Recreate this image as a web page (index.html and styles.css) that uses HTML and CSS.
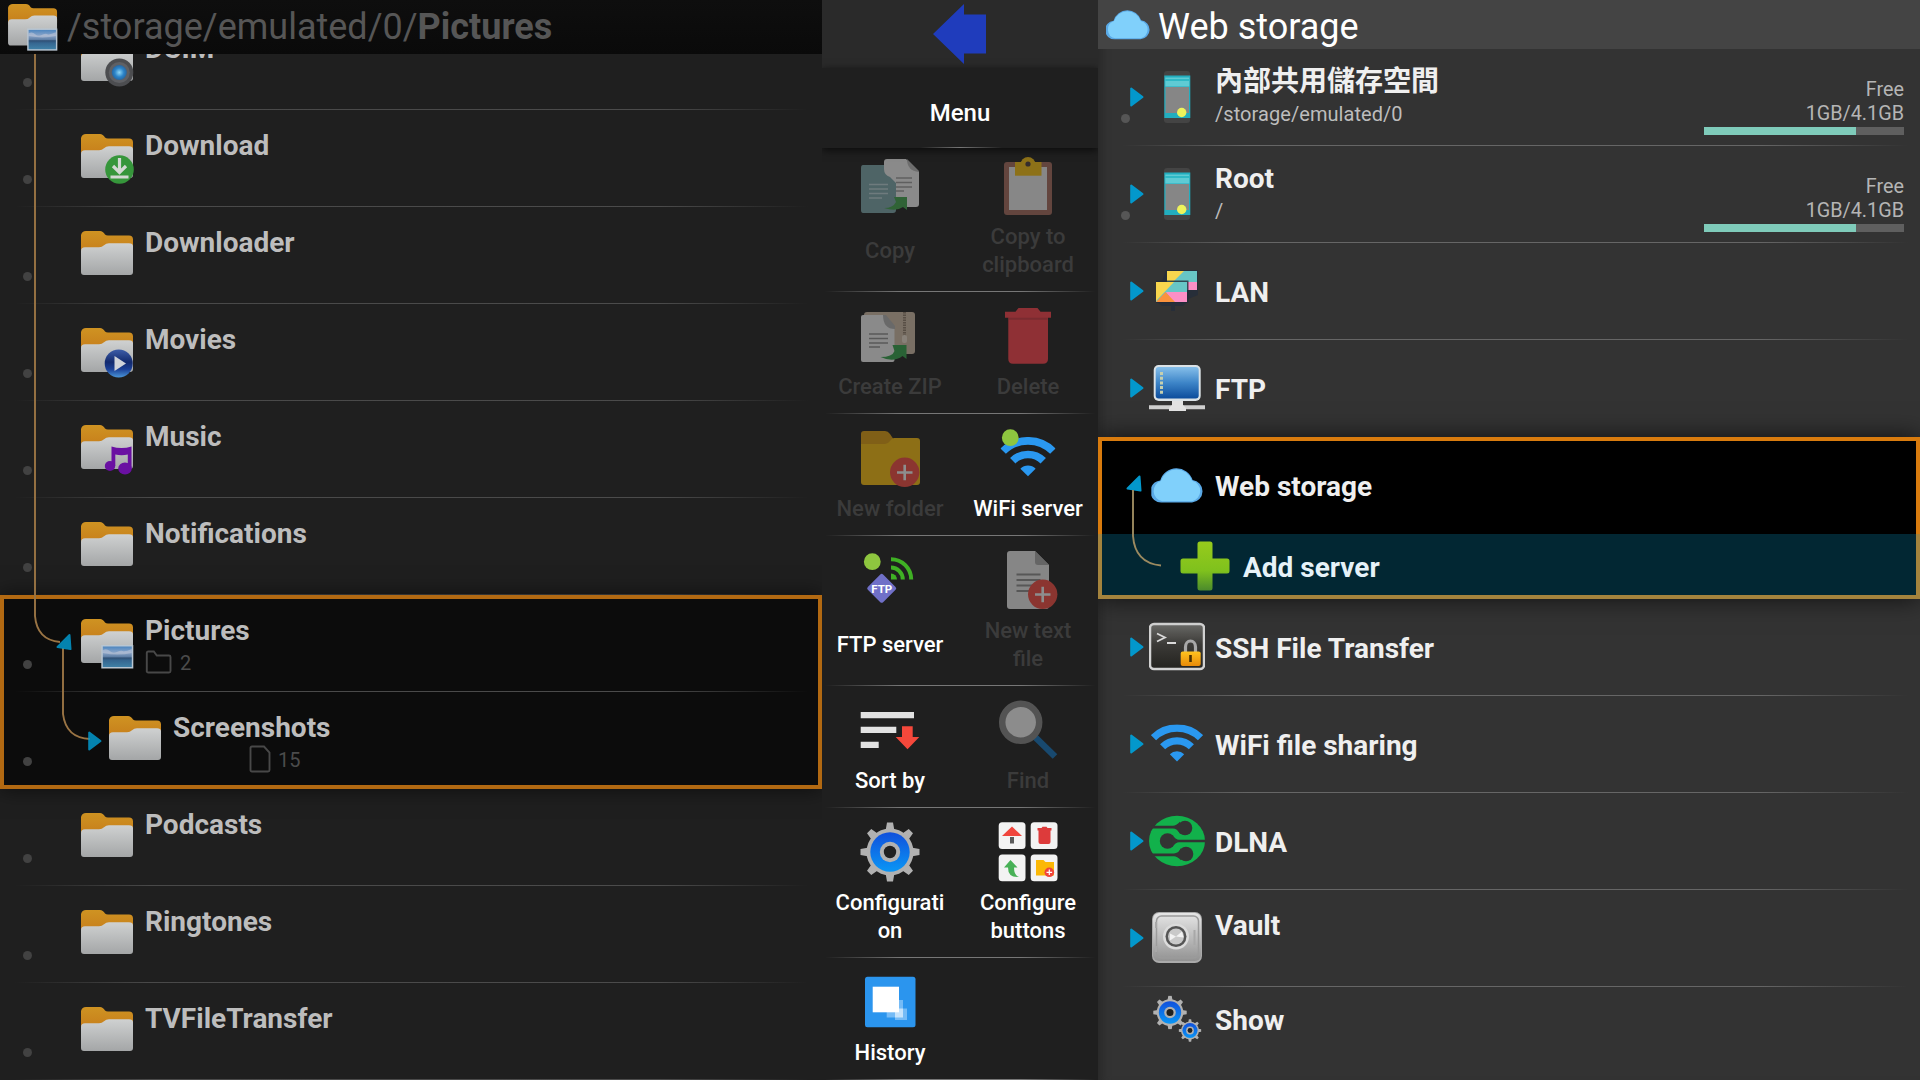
FILE: index.html
```html
<!DOCTYPE html>
<html lang="en">
<head>
<meta charset="utf-8">
<title>File manager</title>
<link rel="stylesheet" href="styles.css">
</head>
<body>
<svg class="defs" aria-hidden="true">
  <defs>
    <linearGradient id="gFront" x1="0" y1="0" x2="0" y2="1"><stop offset="0" stop-color="#cfd1d1"/><stop offset="1" stop-color="#a4a6a7"/></linearGradient>
    <linearGradient id="gTab" x1="0" y1="0" x2="0" y2="1"><stop offset="0" stop-color="#cf9322"/><stop offset="1" stop-color="#c67d1b"/></linearGradient>
    <linearGradient id="gSea" x1="0" y1="0" x2="0" y2="1"><stop offset="0" stop-color="#4d86c0"/><stop offset=".3" stop-color="#8ba5c8"/><stop offset=".5" stop-color="#5f7fa6"/><stop offset=".56" stop-color="#2f5075"/><stop offset=".68" stop-color="#356690"/><stop offset="1" stop-color="#3f80a6"/></linearGradient>
    <linearGradient id="gBlue" x1="0" y1="0" x2="0" y2="1"><stop offset="0" stop-color="#1150dc"/><stop offset="1" stop-color="#0a96f5"/></linearGradient>
    <linearGradient id="gScreen" x1="0" y1="0" x2="0" y2="1"><stop offset="0" stop-color="#86bfea"/><stop offset=".5" stop-color="#3d85c8"/><stop offset="1" stop-color="#0c4c9c"/></linearGradient>
    <linearGradient id="gPlus" x1="0" y1="0" x2="0" y2="1"><stop offset="0" stop-color="#97cb1c"/><stop offset=".6" stop-color="#7fc11d"/><stop offset="1" stop-color="#4b8a2c"/></linearGradient>
    <linearGradient id="gTerm" x1="0" y1="0" x2="0" y2="1"><stop offset="0" stop-color="#6b6b68"/><stop offset=".45" stop-color="#3b3a37"/><stop offset="1" stop-color="#24231f"/></linearGradient>
    <linearGradient id="gLock" x1="0" y1="0" x2="0" y2="1"><stop offset="0" stop-color="#ffc31f"/><stop offset="1" stop-color="#e88a08"/></linearGradient>
    <linearGradient id="gSafe" x1="0" y1="0" x2="0" y2="1"><stop offset="0" stop-color="#e6e6e6"/><stop offset="1" stop-color="#929292"/></linearGradient>
    <radialGradient id="gLens"><stop offset="0" stop-color="#8fd6f5"/><stop offset=".6" stop-color="#2b84c9"/><stop offset="1" stop-color="#2766a0"/></radialGradient>
    <linearGradient id="gPlay" x1="0" y1="0" x2="0" y2="1"><stop offset="0" stop-color="#3d5da8"/><stop offset=".45" stop-color="#132a6e"/><stop offset=".7" stop-color="#1b3f96"/><stop offset="1" stop-color="#4a96d8"/></linearGradient>
  </defs>
  <symbol id="folder" viewBox="0 0 54 52">
    <path fill="url(#gTab)" d="M0 22V4Q1 0 5 0h14q3 0 5 3.500q1 .9 3 .9h21q4 0 4 4V20z"/>
    <path fill="url(#gFront)" d="M0 20q0-3.700 4-3.700h14q3 0 5-2t5-2h20q4 0 4 3V41q0 3-3 3H3q-3 0-3-3z"/>
  </symbol>
  <symbol id="b-pic" viewBox="0 0 54 52"><path fill="#b9c6d2" d="M20.300 26h32v23.500h-32z"/><path fill="url(#gSea)" d="M21.800 27.500h29v20.500h-29z"/><path fill="#c3c9d8" opacity=".55" d="M21.800 31q4-2 7 1t7 1 6-1 9-2v4q-14 3-29 0z"/></symbol>
  <symbol id="b-cam" viewBox="0 0 54 52"><circle cx="38.300" cy="35.500" r="14" fill="#4c4d50"/><circle cx="38.300" cy="35.500" r="10.500" fill="#5f6064"/><circle cx="38.300" cy="35.500" r="7.500" fill="url(#gLens)"/></symbol>
  <symbol id="b-down" viewBox="0 0 54 52"><circle cx="38.500" cy="35.500" r="14.300" fill="#36963b"/><path d="M38.500 24v14M32 32l6.500 6.500L45 32M29.500 43h18" fill="none" stroke="#d3d8d3" stroke-width="3.200"/></symbol>
  <symbol id="b-play" viewBox="0 0 54 52"><circle cx="37.700" cy="35.500" r="14" fill="url(#gPlay)"/><path fill="#d0d3da" d="M33.500 28l11.500 7.500L33.500 43z"/></symbol>
  <symbol id="b-music" viewBox="0 0 54 52"><g fill="#6a10a2"><path d="M30.500 21.500q10 3 20 0V44h-3.700V29.500q-6 1.500-12.500 0V41h-3.800z"/><ellipse cx="29" cy="41" rx="5.200" ry="5"/><ellipse cx="44" cy="43.500" rx="6.800" ry="6"/></g></symbol>
  <symbol id="tri" viewBox="0 0 14 20"><path fill="#0398cc" stroke="#0398cc" stroke-width="2" stroke-linejoin="round" d="M1.200 1.500v17L12.500 10z"/></symbol>
  <symbol id="tri-open" viewBox="0 0 16 17"><path fill="#0398cc" stroke="#0398cc" stroke-width="2" stroke-linejoin="round" d="M13.500 1.500L1.500 13.500l13 2z"/></symbol>
  <symbol id="cloud" viewBox="0 0 52 36"><path fill="#5aa9e6" d="M11 35.500A11 11 0 0 1 9 13.500 A17 17 0 0 1 41.500 13 A11.300 11.300 0 0 1 41 35.500z"/><path fill="#80d0fb" d="M11 34.300A10.500 10.500 0 0 1 9.500 14 A16.500 16.500 0 0 1 41 13.800 A10.500 10.500 0 0 1 41 34.300z"/></symbol>
  <symbol id="wifi" viewBox="0 0 52 38"><g fill="none" stroke="#2a98f0"><path stroke-width="7.300" d="M2.500 13.200A33.300 33.300 0 0 1 49.500 13.200"/><path stroke-width="7.200" d="M11.600 22.300A20.400 20.400 0 0 1 40.400 22.300"/></g><path fill="#2a98f0" d="M26 37l-7.200-7.200a10.200 10.200 0 0 1 14.400 0z"/></symbol>
  <symbol id="phone" viewBox="0 0 56 56"><rect x="15" y="2" width="26" height="52" rx="3" fill="#444"/><path fill="#22aebf" d="M15.300 6.500h26V49h-26z"/><path fill="#5fcbd4" d="M16.300 8.500h24v9h-24z"/><path fill="#2fb9c6" d="M16.300 10h24v2h-24z"/><path fill="#868686" d="M16.500 18h23.500v26H16.500z"/><circle cx="32.700" cy="43.500" r="4.700" fill="#eef35b"/></symbol>
  <symbol id="lan" viewBox="0 0 56 56"><path fill="#272e39" d="M17 7h32v25l-10 4H8v-4zM8 39h30l-4 4h-8v5h-4v-5h-9z"/><path fill="#67c6c6" d="M18 8h30v19H18z"/><path fill="#f8d64e" d="M18 8h17L25 18h-7z"/><path fill="#fc8fc6" d="M38 19h10v8h-9z"/><path fill="#222a38" d="M7 17.500h32.500V40H7z" opacity=".8"/><path fill="#67c6c6" d="M7 19h31v20H7z"/><path fill="#f8d64e" d="M7 19h18L7 38z"/><path fill="#fc8fc6" d="M38 29v10H24l-7-10z"/><path fill="#fb923c" d="M16.500 29L26 39H7z"/></symbol>
  <symbol id="ftp" viewBox="0 0 56 56"><path fill="#d0d0d0" d="M0 45.300h56v4H0z"/><path fill="#e3e3e3" d="M23 40h11v5l3 3v3H20v-3l3-3z"/><rect x="4.700" y="5" width="47" height="36" rx="5" fill="#dbe2e6"/><rect x="6.700" y="7" width="43" height="31.500" rx="3" fill="url(#gScreen)"/><path stroke="#c6cfae" stroke-width="3" stroke-dasharray="3 1.700" d="M12.500 12v23"/></symbol>
  <symbol id="plus" viewBox="0 0 56 56"><path fill="url(#gPlus)" d="M23 3.500h10q2.500 0 2.500 2.500v14.500H50q2.500 0 2.500 2.500v10q0 2.500-2.500 2.500H35.500V50q0 2.500-2.500 2.500H23q-2.500 0-2.500-2.500V35.500H6q-2.500 0-2.500-2.500V23q0-2.500 2.500-2.500h14.500V6q0-2.500 2.500-2.500z"/></symbol>
  <symbol id="ssh" viewBox="0 0 56 56"><rect x="1" y="5" width="54" height="45" rx="4" fill="url(#gTerm)" stroke="#d2d2d2" stroke-width="2.500"/><path d="M8 14.500l8 4-8 4M18 24h9" fill="none" stroke="#dadada" stroke-width="1.800"/><path d="M36.500 34v-6a5 6 0 0 1 10 0v6" fill="none" stroke="#a8a8a8" stroke-width="3.200"/><rect x="31.700" y="32.500" width="20" height="14.500" rx="2" fill="url(#gLock)"/><path stroke="#4a3000" stroke-width="2.600" d="M41.500 36v7"/></symbol>
  <symbol id="dlna" viewBox="0 0 56 56"><ellipse cx="28" cy="28" rx="28" ry="25.200" fill="#12b14b"/><g fill="#333"><circle cx="36" cy="15" r="7.300"/><path d="M2 12.800h22q3 0 7-4v12q-3-5.200-7-5.200H2z"/><circle cx="18.500" cy="28" r="7.700"/><path d="M56 26.700H30q-3 0-7.500-5v12.600q4.500-5 7.500-5h26z"/><circle cx="37" cy="41" r="7.300"/><path d="M2 43.200h23q3 0 7 4v-12q-3 5.200-7 5.200H2z"/></g></symbol>
  <symbol id="vault" viewBox="0 0 56 56"><rect x="3" y="2" width="50" height="51" rx="7" fill="#aaa"/><rect x="4" y="3" width="48" height="48" rx="6" fill="url(#gSafe)"/><rect x="7.500" y="6" width="42" height="42" rx="5" fill="none" stroke="#9b9b9b" stroke-width="1.500"/><circle cx="27" cy="26.500" r="13" fill="#dcdcdc"/><circle cx="27" cy="26.500" r="10.500" fill="#555"/><circle cx="27" cy="26.500" r="8" fill="#c9c9c9"/><path fill="#f2f2f2" d="M27 26.500l-6 4v-7zM27 26.500l6-5 1.500 6z"/><path stroke="#a8a8a8" stroke-width="2" d="M45.500 20v15M7 12v6M7 36v6"/></symbol>
  <symbol id="gear" viewBox="0 0 60 60">
    <g fill="#b1b1b1"><circle cx="30" cy="30" r="23.500"/>
      <g id="teeth"><path id="tooth" d="M25.500 9l1.500-8.500h6L34.500 9zM25.500 51l1.500 8.500h6l1.500-8.500z"/><use href="#tooth" transform="rotate(45 30 30)"/><use href="#tooth" transform="rotate(90 30 30)"/><use href="#tooth" transform="rotate(135 30 30)"/></g></g>
    <circle cx="30" cy="30" r="19.700" fill="url(#gBlue)"/><circle cx="30" cy="30" r="10.200" fill="#b1b1b1"/><circle cx="30" cy="30" r="6.200" fill="#202020"/>
  </symbol>
  <symbol id="badge-plus" viewBox="0 0 60 60"><circle cx="44.700" cy="44.300" r="14.700" fill="#ee4a40"/><path stroke="#f2f2f2" stroke-width="2.600" d="M37 44.500h15.500M44.700 36.700v15.500"/></symbol>
</svg>

<div class="app">
  <section class="panel files">
    <header class="path">
      <svg class="path-icon" viewBox="0 0 54 52"><use href="#folder"/><use href="#b-pic"/></svg>
      <h1>/storage/emulated/0/<b>Pictures</b></h1>
    </header>
    <div class="file-list">
      <div class="row"><i class="dot"></i><svg class="fi"><use href="#folder"/><use href="#b-cam"/></svg><div class="info"><span class="name">DCIM</span></div></div>
      <div class="row"><i class="dot"></i><svg class="fi"><use href="#folder"/><use href="#b-down"/></svg><div class="info"><span class="name">Download</span></div></div>
      <div class="row"><i class="dot"></i><svg class="fi"><use href="#folder"/></svg><div class="info"><span class="name">Downloader</span></div></div>
      <div class="row"><i class="dot"></i><svg class="fi"><use href="#folder"/><use href="#b-play"/></svg><div class="info"><span class="name">Movies</span></div></div>
      <div class="row"><i class="dot"></i><svg class="fi"><use href="#folder"/><use href="#b-music"/></svg><div class="info"><span class="name">Music</span></div></div>
      <div class="row"><i class="dot"></i><svg class="fi"><use href="#folder"/></svg><div class="info"><span class="name">Notifications</span></div></div>
      <div class="current">
        <div class="row"><i class="dot"></i><svg class="fi"><use href="#folder"/><use href="#b-pic"/></svg>
          <div class="info"><span class="name">Pictures</span>
            <span class="count"><svg width="27" height="24" viewBox="0 0 27 24"><path d="M1.800 22V3q0-1.500 1.500-1.500h5.500l3 4H24q1.500 0 1.500 1.500v14q0 1.500-1.500 1.500H3.300q-1.500 0-1.500-1.500z" fill="none" stroke="#484848" stroke-width="1.900"/></svg>2</span>
          </div></div>
        <div class="row child"><i class="dot"></i><svg class="fi"><use href="#folder"/></svg>
          <div class="info"><span class="name">Screenshots</span>
            <span class="count docs"><svg width="22" height="28" viewBox="0 0 22 28"><path d="M1.500 25V3q0-1.500 1.500-1.500h12l5.500 6V25q0 1.500-1.500 1.500H3q-1.500 0-1.500-1.500z" fill="none" stroke="#484848" stroke-width="1.900"/></svg>15</span>
          </div></div>
      </div>
      <div class="row"><i class="dot"></i><svg class="fi"><use href="#folder"/></svg><div class="info"><span class="name">Podcasts</span></div></div>
      <div class="row"><i class="dot"></i><svg class="fi"><use href="#folder"/></svg><div class="info"><span class="name">Ringtones</span></div></div>
      <div class="row"><i class="dot"></i><svg class="fi"><use href="#folder"/></svg><div class="info"><span class="name">TVFileTransfer</span></div></div>
    </div>
    <svg class="tree" width="110" height="720" viewBox="0 54 110 720">
      <path d="M35 54V616Q37 640 60 642M63 648V714Q66 738 90 739" fill="none" stroke="#9a7444" stroke-width="1.900"/>
      <use href="#tri-open" x="56" y="633.500" width="16" height="17" opacity=".85"/>
      <use href="#tri" x="88" y="731" width="14" height="20" opacity=".85"/>
    </svg>
  </section>

  <nav class="panel menu">
    <div class="switch"><svg width="54" height="60" viewBox="0 0 54 60"><path fill="#1f3cbc" d="M0 30L31 0V10.500H53V49.500H31V60z"/></svg></div>
    <div class="menu-title">Menu</div>
    <div class="grid">
      <div class="line">
        <div class="item off"><svg viewBox="0 0 60 60"><path fill="#ececec" d="M27 3h19l13 13v32q0 3-3 3H27q-3 0-3-3V6q0-3 3-3z"/><path fill="#b5b5b5" d="M47 3l12 12v1q-12-1-12-13z"/><path fill="#7aa3a8" d="M3 9h21v4q0 6 6 8l6 6v27q0 3-3 3H3q-2 0-2-3V12q0-3 2-3z"/><path stroke="#b7cfd3" stroke-width="1.500" d="M9 28.500h19M9 33h19M9 37.500h19M9 42h13"/><path stroke="#9a9a9a" stroke-width="1.400" d="M36 22h16M36 26.500h16M36 31h16M36 35h8"/><path fill="#40a24c" d="M24 52q9 0 12-6l-2-5h13v13l-4-3q-7 5-19 1z"/></svg><span>Copy</span></div>
        <div class="item off"><svg viewBox="0 0 60 60"><rect x="6" y="6" width="48" height="53" rx="3" fill="#a1695c"/><path fill="#e6e6e6" d="M11 11h38v43H11z"/><circle cx="30" cy="8.500" r="7.500" fill="#f2bc12"/><path fill="#f2bc12" d="M17 6h26.500v13.700H17z"/><circle cx="30" cy="8" r="2.600" fill="#493b3b"/></svg><span>Copy to clipboard</span></div>
      </div>
      <div class="line">
        <div class="item off"><svg viewBox="0 0 60 60"><rect x="4" y="6" width="51" height="42" rx="3" fill="#ccb8a3"/><path stroke="#8c7b6b" stroke-width="3" stroke-dasharray="1.500 1" d="M44.500 6v26"/><rect x="42" y="29" width="5" height="8" rx="2" fill="#e9dccb"/><path fill="#ececec" d="M3 9h20l11.500 12v33q0 2-2 2H3q-2 0-2-2V11q0-2 2-2z"/><path fill="#adadad" d="M23 9h3l9 11v3q-12 0-12-14z"/><path stroke="#8e8e8e" stroke-width="1.500" d="M9 28h19M9 32.500h19M9 37h19M9 41h11"/><path fill="#34a04a" d="M20.500 51q12 0 14-6l-2-6h14v14l-4-3q-9 7-22 1z"/></svg><span>Create ZIP</span></div>
        <div class="item off"><svg viewBox="0 0 60 60"><path fill="#f5404a" d="M7 5.700h10.500L20.500 2h19l3 3.700H53v6h-3V53q0 4.700-5 4.700H15q-4.700 0-4.700-4.700V11.700H7z"/><path fill="#a62d35" d="M10.300 11.700h39.400v2H10.300z" opacity=".5"/></svg><span>Delete</span></div>
      </div>
      <div class="line">
        <div class="item off"><svg viewBox="0 0 60 60"><path fill="#d99b10" d="M1 14V6q0-3 3-3h21q3 0 5 3l4 6v5H1z"/><path fill="#f2b90f" d="M1 16h24q3 0 5-3t4-3h23q3 0 3 3v41q0 3-3 3H4q-3 0-3-3z"/><use href="#badge-plus"/></svg><span>New folder</span></div>
        <div class="item"><svg viewBox="0 0 60 60"><use href="#wifi" x="2.500" y="9" width="55" height="40.500"/><circle cx="12.300" cy="9.700" r="8.400" fill="#8ec63f"/></svg><span>WiFi server</span></div>
      </div>
      <div class="line">
        <div class="item"><svg viewBox="0 0 60 60"><circle cx="12.300" cy="11.700" r="8.400" fill="#8ec63f"/><path fill="none" stroke="#3fb024" stroke-width="4" d="M31 9.200A20.200 20.200 0 0 1 51.200 29.400M31 17.600A11.800 11.800 0 0 1 42.800 29.400"/><path fill="#3fb024" d="M31 23.500a6 6 0 0 1 6 6h-6z"/><rect x="10.900" y="27.500" width="21.600" height="21.600" rx="2" transform="rotate(45 21.700 38.300)" fill="#7070c8"/><text x="21.700" y="42.500" text-anchor="middle" class="ftp-text">FTP</text></svg><span>FTP server</span></div>
        <div class="item off"><svg viewBox="0 0 60 60"><path fill="#e4e4e4" d="M12 1h25l14 14v41q0 3-3 3H12q-3 0-3-3V4q0-3 3-3z"/><path fill="#a6a6a6" d="M37 1l14 14H40q-3 0-3-3z"/><path stroke="#8a8a8a" stroke-width="1.900" d="M18.500 24.500h24M18.500 30h24M18.500 35.500h20M18.500 41h13"/><use href="#badge-plus"/></svg><span>New text file</span></div>
      </div>
      <div class="line">
        <div class="item"><svg viewBox="0 0 60 60"><path fill="#e2e2e2" d="M.7 12H54v6.200H.7zM.7 26.700h35.600v6.200H.7zM.7 41.700h18v6.200H.7z"/><path fill="#f5483b" d="M42 26.300h10.700V37h6.600L47.500 49.300 35.700 37H42z"/></svg><span>Sort by</span></div>
        <div class="item off"><svg viewBox="0 0 60 60"><path stroke="#1271b8" stroke-width="6.500" d="M37 37l20 19.500"/><circle cx="22.700" cy="22.300" r="18.500" fill="#f0f0f0" stroke="#848484" stroke-width="6.500"/></svg><span>Find</span></div>
      </div>
      <div class="line">
        <div class="item"><svg viewBox="0 0 60 60"><use href="#gear"/></svg><span>Configurati&#8203;on</span></div>
        <div class="item"><svg viewBox="0 0 60 60"><g fill="#f3f3f3"><rect x=".7" y=".3" width="26.800" height="26.800" rx="3.500"/><rect x="32.700" y=".3" width="26.800" height="26.800" rx="3.500"/><rect x=".7" y="32.500" width="26.800" height="26.800" rx="3.500"/><rect x="32.700" y="32.500" width="26.800" height="26.800" rx="3.500"/></g><path fill="#f0453c" d="M14 4.500l10 9.500H4z"/><path fill="#5b5b5b" d="M12 15h4v6.500h-4z"/><path fill="#dd3b3b" d="M39.500 6h4l1-1.200h4l1 1.200h4v2.500h-1V20q0 2-2 2h-8q-2 0-2-2V8.500h-1z"/><path fill="#48b157" d="M12.500 38l7 7.500h-3.500q0 8 5 9.500-11 1-11-9.500H6z"/><path fill="#fbb806" d="M38 38h7.500l2 2H56v13.500H38z"/><circle cx="51.300" cy="50.300" r="4.800" fill="#f0453c"/><path stroke="#fff" stroke-width="1.200" d="M48.500 50.300h5.600M51.300 47.500v5.600"/></svg><span>Configure buttons</span></div>
      </div>
      <div class="line">
        <div class="item"><svg viewBox="0 0 60 60"><rect x="5" y="4.700" width="50.500" height="50.500" rx="2.500" fill="#2b95ee"/><path fill="#8fc8f8" d="M26.700 28H43v17.500H26.700zM35 36.500h12v11.500H35z" opacity=".75"/><path fill="#c6e3fb" d="M35 36.500h8v9h-8z"/><path fill="#fff" d="M12.700 14.700H39v25.600H12.700z"/></svg><span>History</span></div>
        <div class="item"></div>
      </div>
    </div>
  </nav>

  <section class="panel places">
    <header class="heading"><svg width="44" height="31"><use href="#cloud"/></svg><h2>Web storage</h2></header>
    <div class="place two"><i class="dot"></i><svg class="tri"><use href="#tri"/></svg><svg class="pi"><use href="#phone"/></svg>
      <div class="info"><span class="name">內部共用儲存空間</span><span class="sub">/storage/emulated/0</span></div>
      <div class="space"><span>Free</span><span>1GB/4.1GB</span><div class="bar"><div style="width:76%"></div></div></div></div>
    <div class="place two"><i class="dot"></i><svg class="tri"><use href="#tri"/></svg><svg class="pi"><use href="#phone"/></svg>
      <div class="info"><span class="name">Root</span><span class="sub">/</span></div>
      <div class="space"><span>Free</span><span>1GB/4.1GB</span><div class="bar"><div style="width:76%"></div></div></div></div>
    <div class="place"><svg class="tri"><use href="#tri"/></svg><svg class="pi"><use href="#lan"/></svg><div class="info"><span class="name">LAN</span></div></div>
    <div class="place plain"><svg class="tri"><use href="#tri"/></svg><svg class="pi"><use href="#ftp"/></svg><div class="info"><span class="name">FTP</span></div></div>
    <div class="current">
      <div class="place"><svg class="tri open"><use href="#tri-open"/></svg><svg class="pi" viewBox="0 0 56 56"><use href="#cloud" x="2.300" y="10" width="51.700" height="36"/></svg><div class="info"><span class="name">Web storage</span></div></div>
      <div class="place short add"><svg class="pi"><use href="#plus"/></svg><div class="info"><span class="name">Add server</span></div></div>
      <svg class="branch" width="32" height="80" viewBox="0 0 32 80"><path d="M3 0V46Q5 73 31 75.500" fill="none" stroke="#9c8a60" stroke-width="1.900"/></svg>
    </div>
    <div class="place"><svg class="tri"><use href="#tri"/></svg><svg class="pi"><use href="#ssh"/></svg><div class="info"><span class="name">SSH File Transfer</span></div></div>
    <div class="place"><svg class="tri"><use href="#tri"/></svg><svg class="pi" viewBox="0 0 56 56"><use href="#wifi" x="2" y="8.500" width="52" height="38"/></svg><div class="info"><span class="name">WiFi file sharing</span></div></div>
    <div class="place"><svg class="tri"><use href="#tri"/></svg><svg class="pi"><use href="#dlna"/></svg><div class="info"><span class="name">DLNA</span></div></div>
    <div class="place vault"><svg class="tri"><use href="#tri"/></svg><svg class="pi"><use href="#vault"/></svg><div class="info"><span class="name">Vault</span></div></div>
    <div class="place short plain"><svg class="pi" viewBox="0 0 56 56"><use href="#gear" x="4" y="4.500" width="34" height="34"/><use href="#gear" x="29.500" y="28" width="23" height="23"/></svg><div class="info"><span class="name">Show</span></div></div>
  </section>
</div>
</body>
</html>
```

FILE: styles.css
```css
* { box-sizing: border-box; }
body {
  margin: 0;
  background: #1f1f1f;
  font-family: Roboto, "Noto Sans CJK TC", sans-serif;
  overflow: hidden;
}
h1, h2 { margin: 0; font-weight: 400; white-space: nowrap; }
svg { display: block; flex: none; }
.defs { position: absolute; width: 0; height: 0; }
.app { display: grid; grid-template-columns: 822px 276px 822px; height: 1080px; }
.panel { position: relative; display: flex; flex-direction: column; min-width: 0; overflow: hidden; height: 1080px; }

/* shared list parts */
.dot { flex: none; width: 9px; height: 9px; border-radius: 50%; margin-top: 65px; background: #424242; }
.info { display: flex; flex-direction: column; }
.name { font-size: 28px; line-height: 32px; font-weight: 700; white-space: nowrap; }

/* file tree */
.files { background: #1f1f1f; }
.path { display: flex; flex: none; height: 54px; padding: 4px 0 0 8px; gap: 8px; background: linear-gradient(#0e0e0e, #0a0a0a); }
.path-icon { width: 51px; height: 49px; }
.path h1 { font-size: 36px; line-height: 46px; color: #565656; }
.path b { font-weight: 700; }
.file-list { flex: 1; min-height: 0; overflow: hidden; }
.file-list > .row:first-child { margin-top: -41px; }
.row {
  display: flex;
  align-items: flex-start;
  height: 97px;
  padding-left: 23px;
  background: linear-gradient(90deg, transparent 15px, #494949 150px, #4b4b4b 660px, transparent 808px) bottom / 100% 1px no-repeat;
}
.fi { width: 54px; height: 52px; margin: 24px 0 0 49px; }
.row .info { padding-top: 20px; margin-left: 10px; color: #bdbdbd; }
.child .fi { margin-left: 77px; }
.count { display: flex; align-items: center; gap: 8px; height: 24px; margin-top: 4px; font-size: 20px; color: #4b4b4b; }
.count svg { margin-top: -2px; }
.count.docs { margin-left: 76px; height: 28px; margin-top: 2px; gap: 7px; }
.current { position: relative; z-index: 1; background: #0c0c0c; box-shadow: 0 0 20px rgba(0, 0, 0, .6); }
.current::before { content: ""; position: absolute; inset: 0; border: 4px solid #b26912; pointer-events: none; }
.current .row:last-child { background: none; }
.tree { position: absolute; left: 0; top: 54px; z-index: 1; }

/* action menu */
.menu { background: #1f1f1f; color: #fff; font-weight: 500; }
.switch { flex: none; height: 68px; background: #2a2a2a; display: flex; justify-content: center; padding-top: 4px; }
.menu-title {
  flex: none;
  height: 80px;
  font-size: 24px;
  line-height: 90px;
  text-align: center;
  position: relative;
  z-index: 1;
  background: linear-gradient(90deg, transparent 98px, #777 138px, transparent 180px) bottom / 100% 1px no-repeat #1f1f1f;
  box-shadow: 0 2px 8px rgba(0, 0, 0, .7);
}
.grid { margin-top: -6px; }
.line {
  display: grid;
  grid-template-columns: 138px 138px;
  padding: 14px 2px 14px 0;
  margin-left: -1px;
  background: linear-gradient(90deg, transparent 4px, #777 80px, #777 200px, transparent 274px) bottom / 100% 1px no-repeat;
}
.item { display: flex; flex-direction: column; align-items: center; }
.item svg { width: 60px; height: 60px; }
.item span {
  flex: 1;
  display: flex;
  align-items: center;
  justify-content: center;
  width: 112px;
  margin: 7px 0 -1px;
  font-size: 22px;
  line-height: 28px;
  text-align: center;
}
.off span { color: #3b3b3b; }
.off svg { opacity: .52; }
.ftp-text { font-size: 11.500px; font-weight: 700; fill: #fff; }

/* storage places */
.places { background: #333; color: #efefef; box-shadow: inset 10px 0 8px -6px #292929; }
.heading { display: flex; flex: none; height: 49px; padding: 9px 0 0 8px; gap: 8px; background: #444; }
.heading h2 { font-size: 36px; line-height: 37px; color: #fff; }
.place {
  display: flex;
  flex: none;
  align-items: flex-start;
  height: 97px;
  padding-left: 32px;
  background: linear-gradient(90deg, transparent 24px, #666 150px, #666 660px, transparent 810px) bottom / 100% 1px no-repeat;
}
.places .dot { background: #565656; margin-left: -9px; }
.tri { width: 14px; height: 20px; margin-top: 38px; }
.pi { width: 56px; height: 56px; margin: 20px 0 0 5px; }
.place .info { margin-left: 10px; padding-top: 34px; }
.two .info { padding-top: 17px; }
.vault .info { padding-top: 20px; }
.sub { margin-top: 4px; font-size: 20px; line-height: 24px; letter-spacing: .06px; color: #bdbdbd; }
.space { display: flex; flex-direction: column; margin: 29px 16px 0 auto; width: 200px; text-align: right; font-size: 19.800px; line-height: 24px; color: #b5b5b5; }
.bar { height: 8px; margin-top: 1px; background: #5f5f5f; }
.bar div { height: 100%; background: #7fcbba; }
.short { height: 65px; }
.short .pi { margin: 4px 0 0 19px; }
.short .info { padding-top: 18px; }
.plain { background: none; }
.places .current { flex: none; background: #000; box-shadow: 0 0 24px rgba(0, 0, 0, .7); }
.places .current::before { border-color: #d87b0e; }
.places .current .place { background: none; }
.places .tri.open { width: 16px; height: 17px; margin: 38px 2px 0 -4px; }
.places .current .add { position: relative; background: rgba(8, 156, 204, .25); color: #e6f2f8; }
.add .pi { margin-left: 47px; }
.branch { position: absolute; left: 32px; top: 53px; }
```
